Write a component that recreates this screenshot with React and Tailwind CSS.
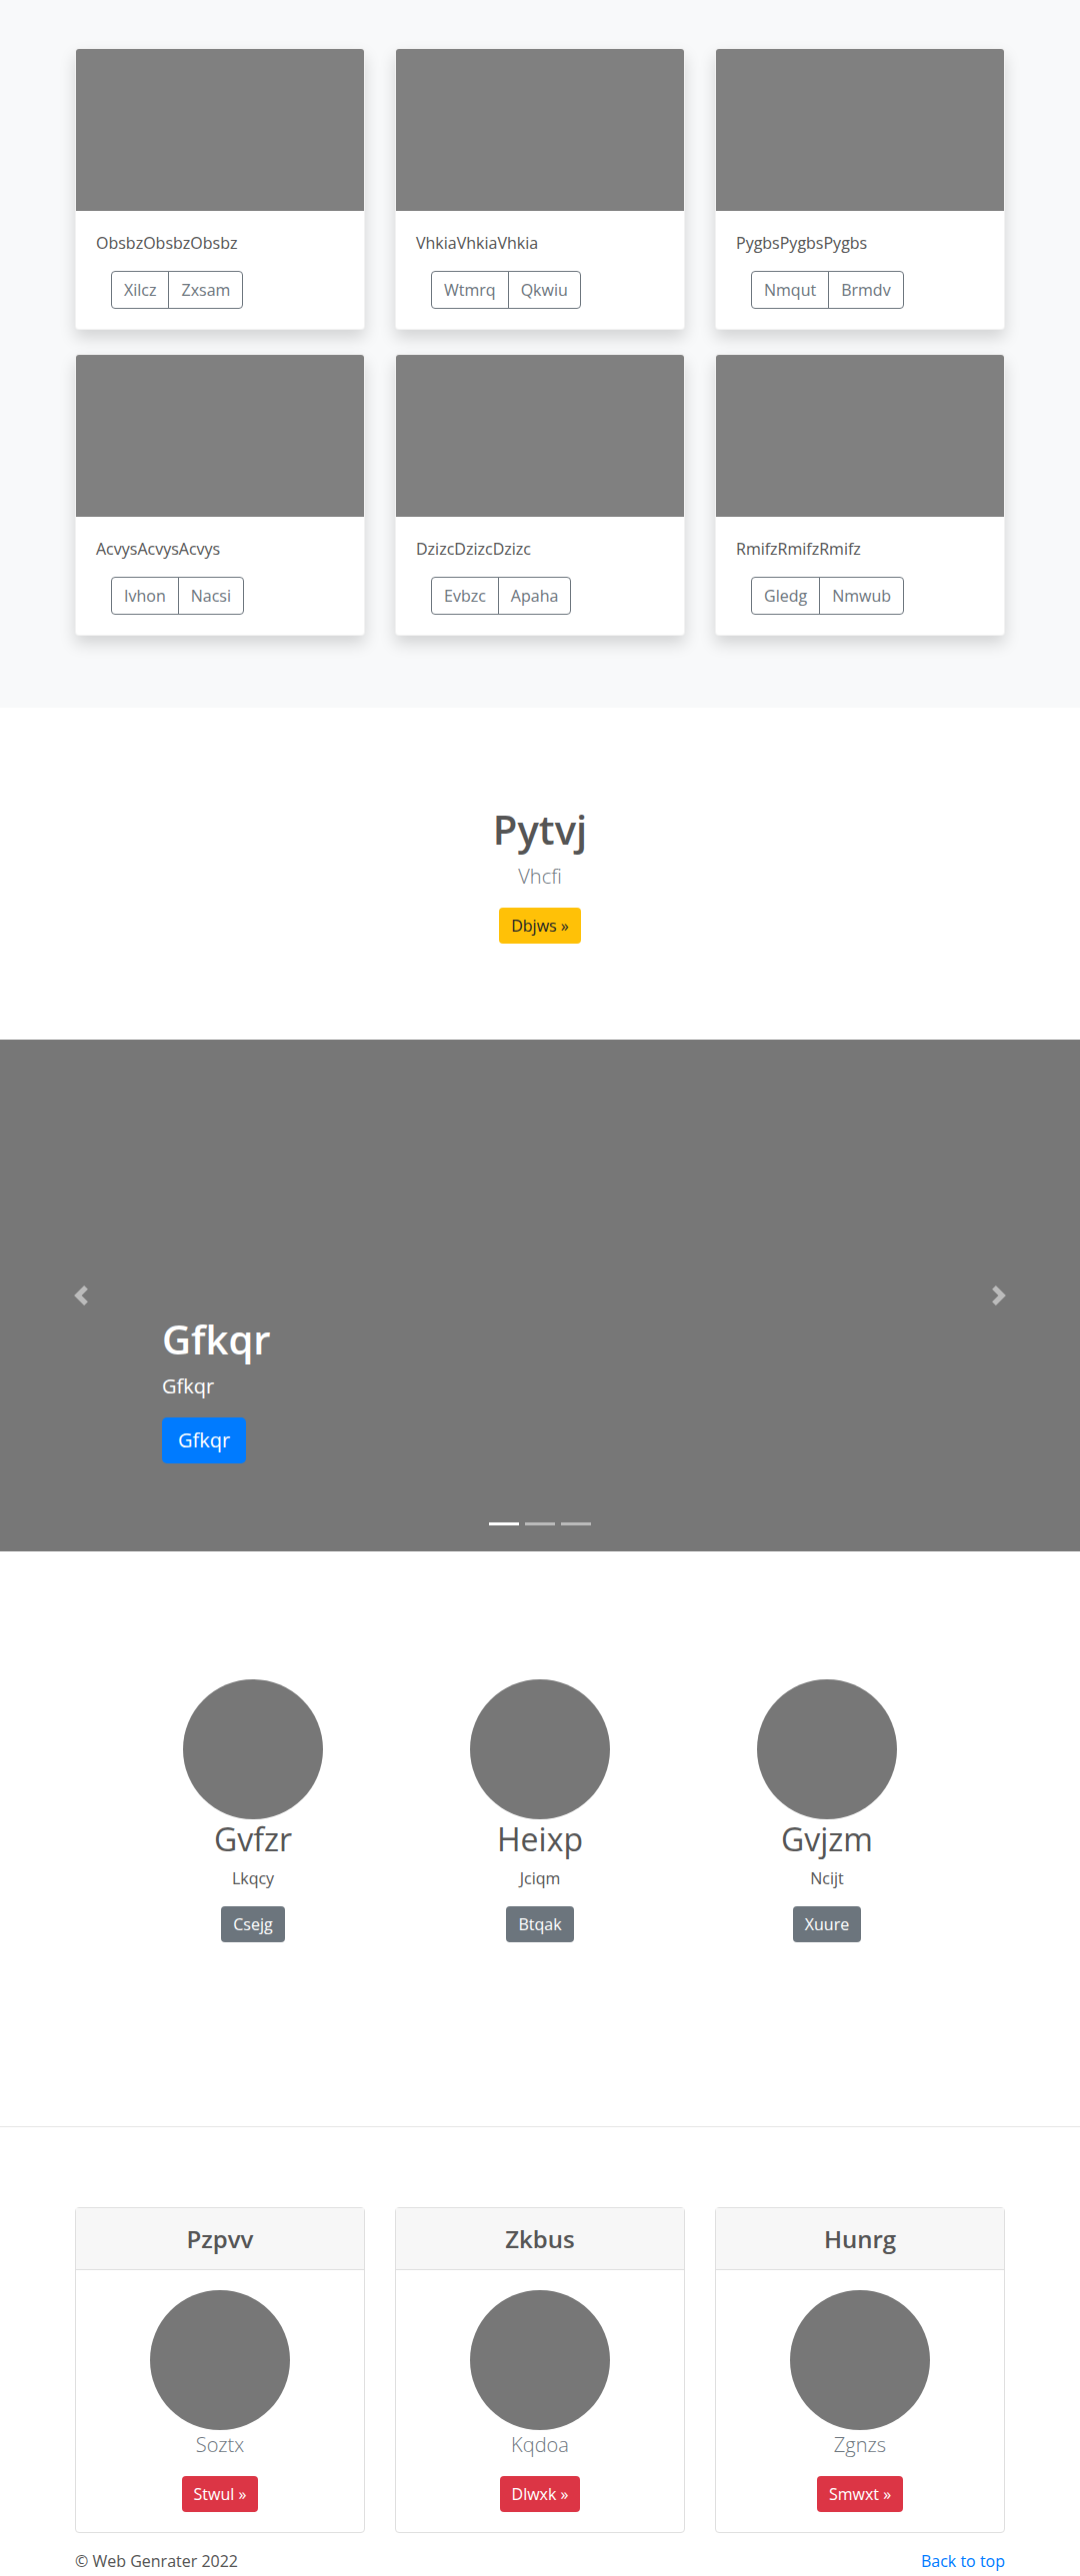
import { useState } from "react";

const albumCards = [
  { title: "ObsbzObsbzObsbz", left: "Xilcz", right: "Zxsam" },
  { title: "VhkiaVhkiaVhkia", left: "Wtmrq", right: "Qkwiu" },
  { title: "PygbsPygbsPygbs", left: "Nmqut", right: "Brmdv" },
  { title: "AcvysAcvysAcvys", left: "Ivhon", right: "Nacsi" },
  { title: "DzizcDzizcDzizc", left: "Evbzc", right: "Apaha" },
  { title: "RmifzRmifzRmifz", left: "Gledg", right: "Nmwub" },
];

const people = [
  { name: "Gvfzr", text: "Lkqcy", action: "Csejg" },
  { name: "Heixp", text: "Jciqm", action: "Btqak" },
  { name: "Gvjzm", text: "Ncijt", action: "Xuure" },
];

const plans = [
  { title: "Pzpvv", text: "Soztx", action: "Stwul »" },
  { title: "Zkbus", text: "Kqdoa", action: "Dlwxk »" },
  { title: "Hunrg", text: "Zgnzs", action: "Smwxt »" },
];

function AlbumCard({ card }) {
  return (
    <div className="overflow-hidden rounded bg-white shadow-[0_8px_16px_rgba(0,0,0,0.15)] border border-black/5">
      <div className="h-[162px] bg-[#808080]" />
      <div className="p-5">
        <p className="mb-4 text-base leading-6 text-[#555]">{card.title}</p>
        <div className="ml-[15px] flex">
          <button
            type="button"
            className="rounded-l border border-[#6c757d] px-3 py-1.5 text-base leading-6 text-[#6c757d]"
          >
            {card.left}
          </button>
          <button
            type="button"
            className="-ml-px rounded-r border border-[#6c757d] px-3 py-1.5 text-base leading-6 text-[#6c757d]"
          >
            {card.right}
          </button>
        </div>
      </div>
    </div>
  );
}

function Chevron({ dir }) {
  const d =
    dir === "prev"
      ? "M5.25 0l-4 4 4 4 1.5-1.5L4.25 4l2.5-2.5L5.25 0z"
      : "M2.75 0l-1.5 1.5L3.75 4l-2.5 2.5L2.75 8l4-4-4-4z";
  return (
    <svg width="20" height="20" viewBox="0 0 8 8" className="opacity-50">
      <path d={d} fill="#fff" />
    </svg>
  );
}

export default function App() {
  const [slide, setSlide] = useState(0);

  return (
    <div className="min-h-[2577px] bg-white font-['Open_Sans',sans-serif] text-[#555]">
      {/* album */}
      <section className="bg-[#f8f9fa] py-12">
        <div className="mx-auto grid w-[930px] grid-cols-3 gap-x-[30px] gap-y-6 pb-6">
          {albumCards.map((card) => (
            <AlbumCard key={card.title} card={card} />
          ))}
        </div>
      </section>

      {/* jumbotron */}
      <section className="flex flex-col items-center pt-[98px] pb-[96px] text-center">
        <h1 className="text-[40px] font-semibold leading-[48px] text-[#555]">Pytvj</h1>
        <p className="mt-2 text-xl font-light leading-[30px] text-[#6c757d]">Vhcfi</p>
        <button
          type="button"
          className="mt-4 rounded bg-[#ffc107] px-3 py-1.5 text-base leading-6 text-[#212529]"
        >
          Dbjws »
        </button>
      </section>

      {/* carousel */}
      <section className="relative h-[512px] bg-[#777]">
        <div className="flex h-full flex-col justify-end pl-[162px] pb-[88px] text-white">
          <h1 className="text-[40px] font-semibold leading-[48px]">Gfkqr</h1>
          <p className="mt-2 text-xl leading-[30px]">Gfkqr</p>
          <div className="mt-4 flex">
            <button
              type="button"
              className="rounded-[5px] bg-[#007bff] px-4 py-2 text-xl leading-[30px] text-white"
            >
              Gfkqr
            </button>
          </div>
        </div>
        <button
          type="button"
          aria-label="Previous"
          className="absolute inset-y-0 left-0 flex w-[15%] items-center justify-center"
        >
          <Chevron dir="prev" />
        </button>
        <button
          type="button"
          aria-label="Next"
          className="absolute inset-y-0 right-0 flex w-[15%] items-center justify-center"
        >
          <Chevron dir="next" />
        </button>
        <div className="absolute bottom-[26px] left-0 right-0 flex justify-center">
          {[0, 1, 2].map((i) => (
            <button
              key={i}
              type="button"
              onClick={() => setSlide(i)}
              className={`mx-[3px] h-[3px] w-[30px] bg-white ${slide === i ? "opacity-100" : "opacity-50"}`}
            />
          ))}
        </div>
      </section>

      {/* marketing */}
      <section className="pt-32 pb-[184px]">
        <div className="mx-auto grid w-[861px] grid-cols-3">
          {people.map((p) => (
            <div key={p.name} className="flex flex-col items-center text-center">
              <div className="h-[140px] w-[140px] rounded-full bg-[#777]" />
              <h2 className="mt-px text-[32px] leading-[38px] text-[#555]">{p.name}</h2>
              <p className="mt-2 text-base leading-6 text-[#555]">{p.text}</p>
              <button
                type="button"
                className="mt-4 rounded bg-[#6c757d] px-3 py-1.5 text-base leading-6 text-white"
              >
                {p.action}
              </button>
            </div>
          ))}
        </div>
      </section>

      <div className="border-t border-[#e5e5e5]" />

      {/* pricing */}
      <section className="pt-20">
        <div className="mx-auto grid w-[930px] grid-cols-3 gap-x-[30px]">
          {plans.map((p) => (
            <div key={p.title} className="rounded border border-[#dfdfdf] text-center">
              <div className="border-b border-[#dfdfdf] bg-[#f7f7f7] py-4">
                <h4 className="text-2xl font-semibold leading-[29px] text-[#555]">{p.title}</h4>
              </div>
              <div className="flex flex-col items-center p-5">
                <div className="h-[140px] w-[140px] rounded-full bg-[#777]" />
                <p className="text-xl font-light leading-[30px] text-[#6c757d]">{p.text}</p>
                <button
                  type="button"
                  className="mt-4 rounded bg-[#dc3545] px-3 py-1.5 text-base leading-6 text-white"
                >
                  {p.action}
                </button>
              </div>
            </div>
          ))}
        </div>
        <footer className="mx-auto mt-4 flex w-[930px] justify-between text-base leading-6">
          <p className="text-[#555]">© Web Genrater 2022</p>
          <a href="#" className="text-[#007bff]">
            Back to top
          </a>
        </footer>
      </section>
    </div>
  );
}
